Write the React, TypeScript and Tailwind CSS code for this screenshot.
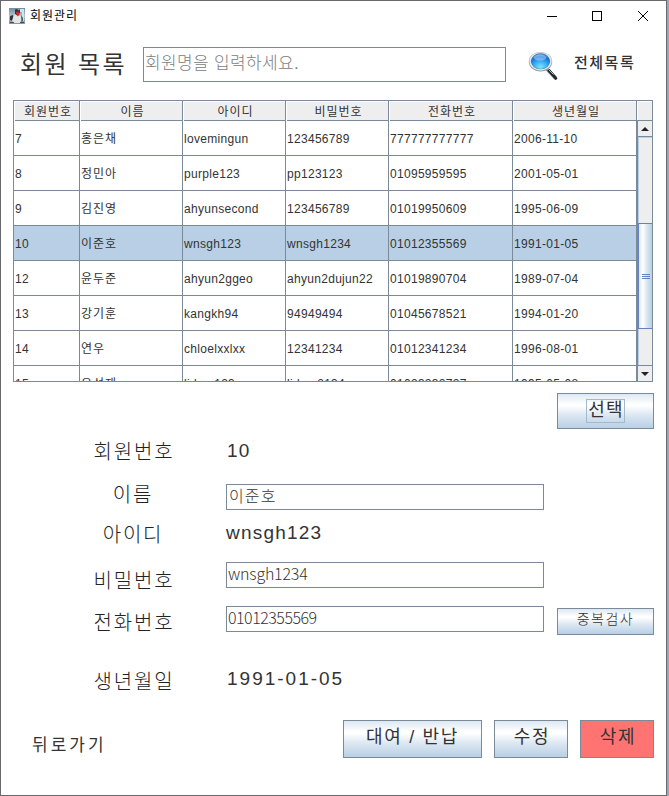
import React from "react";

const members = [
  ["7", "홍은채", "lovemingun", "123456789", "777777777777", "2006-11-10"],
  ["8", "정민아", "purple123", "pp123123", "01095959595", "2001-05-01"],
  ["9", "김진영", "ahyunsecond", "123456789", "01019950609", "1995-06-09"],
  ["10", "이준호", "wnsgh123", "wnsgh1234", "01012355569", "1991-01-05"],
  ["12", "윤두준", "ahyun2ggeo", "ahyun2dujun22", "01019890704", "1989-07-04"],
  ["13", "강기훈", "kangkh94", "94949494", "01045678521", "1994-01-20"],
  ["14", "연우", "chloelxxlxx", "12341234", "01012341234", "1996-08-01"],
  ["15", "유성재", "lidam123", "lidam2134", "01023232727", "1995-05-08"],
];

const headers = ["회원번호", "이름", "아이디", "비밀번호", "전화번호", "생년월일"];
const columns = "grid grid-cols-[66px_103px_103px_103px_124px_124px]";
const steel =
  "border border-[#7a8a99] bg-[linear-gradient(to_bottom,#dde8f3_0%,#ffffff_30%,#ffffff_34%,#dce7f2_62%,#b8cfe5_100%)]";

function JavaIcon() {
  return (
    <svg width="16" height="16" viewBox="0 0 16 16">
      <defs>
        <linearGradient id="tile" x1="0" y1="0" x2="0" y2="1">
          <stop offset="0" stopColor="#6f8ba3" />
          <stop offset="0.5" stopColor="#b4c4d0" />
          <stop offset="1" stopColor="#7d95a6" />
        </linearGradient>
      </defs>
      <rect width="16" height="16" fill="url(#tile)" />
      <path d="M11 1h4v12h-2V4h-2z" fill="#d5e0e8" />
      <path d="M6 1.5l2-.5 1.5 1.5 1.5-1v3l-2 3-3-1z" fill="#3a3336" />
      <path d="M7.5 3.5l2.5.5.7 2.5L9 8 7 6z" fill="#e02323" />
      <path d="M1 8l3-1 1 3-1 3-3-1z" fill="#30373c" />
      <path d="M4.5 8l1.5-2 2.5 2.5 3-1 1 4-1.5 3.5H5.5L3 13z" fill="#e4e6e4" />
      <path d="M12 7l2 3v3l-1.5 1z" fill="#4f5e68" />
      <path d="M1 14h4v1H1zM11 14h4v1h-4z" fill="#43525e" />
    </svg>
  );
}

function Magnifier() {
  return (
    <svg width="32" height="32" viewBox="0 0 32 32">
      <defs>
        <radialGradient id="lens" cx="0.5" cy="0.85" r="0.9">
          <stop offset="0" stopColor="#7be6ff" />
          <stop offset="0.4" stopColor="#39aef5" />
          <stop offset="0.75" stopColor="#1670d6" />
          <stop offset="1" stopColor="#5aaaf0" />
        </radialGradient>
      </defs>
      <path d="M19 19l8.5 9" stroke="#8a8d8f" strokeWidth="3.6" strokeLinecap="round" />
      <path d="M21 20.5l6.8 7.8" stroke="#20262b" strokeWidth="2.8" strokeLinecap="round" />
      <path d="M20.5 19.5l5 5" stroke="#b9bdc0" strokeWidth="1" />
      <ellipse cx="12.5" cy="11.7" rx="11.7" ry="9.8" fill="#9aa0a4" />
      <ellipse cx="12.5" cy="11.3" rx="11.1" ry="9.1" fill="#e6e9ea" />
      <ellipse cx="12.5" cy="11.3" rx="9.6" ry="8" fill="#3476ad" />
      <ellipse cx="12.5" cy="11.5" rx="9.1" ry="7.4" fill="url(#lens)" />
      <ellipse cx="12" cy="7.6" rx="6.3" ry="3" fill="#ffffff" opacity="0.35" />
    </svg>
  );
}

function Field({ children, className }: { children: React.ReactNode; className: string }) {
  return (
    <div className={"shrink-0 whitespace-pre border border-[#7a8a99] bg-white text-[#333] " + className}>
      {children}
    </div>
  );
}

function Label({ children }: { children: React.ReactNode }) {
  return (
    <div className="w-[132px] shrink-0 whitespace-nowrap text-center text-[20px] font-light leading-[42px] tracking-[1.8px] text-[#222]">
      {children}
    </div>
  );
}

function ScrollBar() {
  return (
    <div className="flex h-[260px] w-4 flex-col border-l border-r border-[#7a8a99] bg-[#eee]">
      <div className="flex h-4 items-center justify-center border-b border-[#7a8a99]">
        <svg width="8" height="4" viewBox="0 0 8 4"><path d="M4 0l4 4H0z" fill="#222" /></svg>
      </div>
      <div className="h-[86px] border-l border-t border-[#b8cfe5]" />
      <div className="flex h-[106px] flex-col items-center justify-center gap-px border border-r-0 border-[#6382bf] bg-[linear-gradient(to_right,#dce7f2,#ffffff_30%,#dce7f2_60%,#b8cfe5)]">
        <i className="h-px w-2 bg-[#6382bf]" />
        <i className="h-px w-2 bg-[#6382bf]" />
        <i className="h-px w-2 bg-[#6382bf]" />
      </div>
      <div className="h-[36px] border-l border-[#b8cfe5]" />
      <div className="flex h-4 items-center justify-center border-t border-[#7a8a99]">
        <svg width="8" height="4" viewBox="0 0 8 4"><path d="M0 0h8L4 4z" fill="#222" /></svg>
      </div>
    </div>
  );
}

export default function App() {
  return (
    <div className="flex h-[796px] w-[669px] overflow-hidden bg-[#a0a6b4] font-['Liberation_Sans','Noto_Sans_CJK_KR',sans-serif] text-[#333]">
      <div className="flex h-[796px] w-[667px] shrink-0 flex-col border border-[#66686c] bg-white">
        <div className="flex h-[29px] shrink-0 items-center pl-2 text-black">
          <JavaIcon />
          <span className="ml-[5px] w-[300px] text-[12px] leading-4 tracking-[1px]">회원관리</span>
          <svg className="ml-auto mr-[14px]" width="106" height="12" viewBox="0 0 106 12" fill="none" stroke="#000" shapeRendering="crispEdges">
            <path d="M1 6.5h10" />
            <rect x="46.5" y="1.5" width="9" height="9" />
            <path d="M92 1l10 10M102 1L92 11" shapeRendering="auto" />
          </svg>
        </div>

        <div className="flex h-[70px] shrink-0 items-start">
          <h1 className="ml-[19px] mt-[17px] w-[123px] shrink-0 whitespace-nowrap text-[24px] font-normal leading-9 tracking-[2.4px]">
            회원 목록
          </h1>
          <Field className="mt-[17px] h-[35px] w-[363px] pl-px text-[17px] font-light leading-[32px] tracking-[0.35px] text-[#808080]">
            회원명을 입력하세요.
          </Field>
          <div className="ml-[22px] mt-[20px]"><Magnifier /></div>
          <span className="ml-[14px] mt-[21px] whitespace-nowrap text-[15px] font-medium leading-6 tracking-[1.5px]">전체목록</span>
        </div>

        <div className="ml-3 flex h-[283px] w-[640px] shrink-0 flex-col">
          <div className="flex h-[21px] border-b border-l border-t border-[#7a8a99] bg-[#eee]">
            <div className={columns}>
              {headers.map((h) => (
                <div key={h} className="border-r border-[#7a8a99] pl-[3px] pt-px text-center text-[12px] leading-5 tracking-[1px] shadow-[inset_1px_1px_0_#fff]">
                  {h}
                </div>
              ))}
            </div>
            <div className="w-4 border-r border-[#7a8a99] shadow-[inset_1px_1px_0_#fff]" />
          </div>
          <div className="flex h-[261px] border-b border-l border-[#7a8a99]">
            <div className="h-[260px] overflow-hidden">
              {members.map((m) => (
                <div key={m[0]} className={columns + " h-[35px] " + (m[0] === "10" ? "bg-[#b8cfe5]" : "bg-white")}>
                  {m.map((cell, i) => (
                    <div
                      key={i}
                      className={
                        "h-[35px] whitespace-nowrap border-b border-r border-[#7a8a99] pl-px text-[12px] leading-[37px] " +
                        (i === 1 ? "tracking-[1px]" : "tracking-[0.3px]")
                      }
                    >
                      {cell}
                    </div>
                  ))}
                </div>
              ))}
            </div>
            <ScrollBar />
          </div>
        </div>

        <div className="flex h-[48px] shrink-0 justify-end pr-[12px] pt-[10px]">
          <button className={"flex h-9 w-[97px] items-start justify-center pt-[5px] " + steel}>
            <span className="h-6 w-[39px] whitespace-nowrap border border-[#a3b8cc] pl-px text-[18px] leading-[20px] tracking-[1.2px]">선택</span>
          </button>
        </div>

        <div className="ml-[67px] flex h-[43px] shrink-0">
          <Label>회원번호</Label>
          <span className="ml-[27px] text-[19px] leading-[40px] tracking-[1.2px]">10</span>
        </div>
        <div className="ml-[66px] flex h-[40px] shrink-0">
          <Label>이름</Label>
          <Field className="ml-[27px] mt-[10px] h-[26px] w-[318px] pl-[2px] text-[16px] font-light leading-[23px] tracking-[1.1px]">이준호</Field>
        </div>
        <div className="ml-[66px] flex h-[46px] shrink-0">
          <Label>아이디</Label>
          <span className="ml-[27px] text-[19px] leading-[38px] tracking-[1.2px]">wnsgh123</span>
        </div>
        <div className="ml-[67px] flex h-[42px] shrink-0">
          <Label>비밀번호</Label>
          <Field className="ml-[26px] mt-[2px] h-[26px] w-[318px] pl-px font-['Noto_Sans_CJK_KR',sans-serif] text-[16px] font-light leading-[21px] tracking-[-0.2px]">wnsgh1234</Field>
        </div>
        <div className="ml-[67px] flex h-[59px] shrink-0">
          <Label>전화번호</Label>
          <Field className="ml-[26px] mt-[4px] h-[26px] w-[318px] pl-px font-['Noto_Sans_CJK_KR',sans-serif] text-[16px] font-light leading-[21px] tracking-[-0.5px]">01012355569</Field>
          <button className={"ml-[13px] mt-[6px] h-[27px] w-[97px] whitespace-nowrap pb-1 text-[14px] font-light leading-[21px] tracking-[1.5px] " + steel}>중복검사</button>
        </div>
        <div className="ml-[67px] flex h-[59px] shrink-0">
          <Label>생년월일</Label>
          <span className="ml-[27px] text-[19px] leading-[36px] tracking-[2px]">1991-01-05</span>
        </div>

        <div className="flex h-[74px] shrink-0 items-start">
          <span className="ml-[31px] mt-[14px] w-[311px] text-[17px] leading-6 tracking-[3px]">뒤로가기</span>
          <div className="flex gap-3 text-[18px] leading-[33px] tracking-[1.7px]">
            <button className={"flex h-[38px] w-[139px] justify-center whitespace-nowrap " + steel}>대여 / 반납</button>
            <button className={"flex h-[38px] w-[74px] justify-center pl-[2px] " + steel}>수정</button>
            <button className="flex h-[38px] w-[74px] justify-center border border-[#7a8a99] bg-[#ff7373] pl-[2px]">삭제</button>
          </div>
        </div>
      </div>
    </div>
  );
}
